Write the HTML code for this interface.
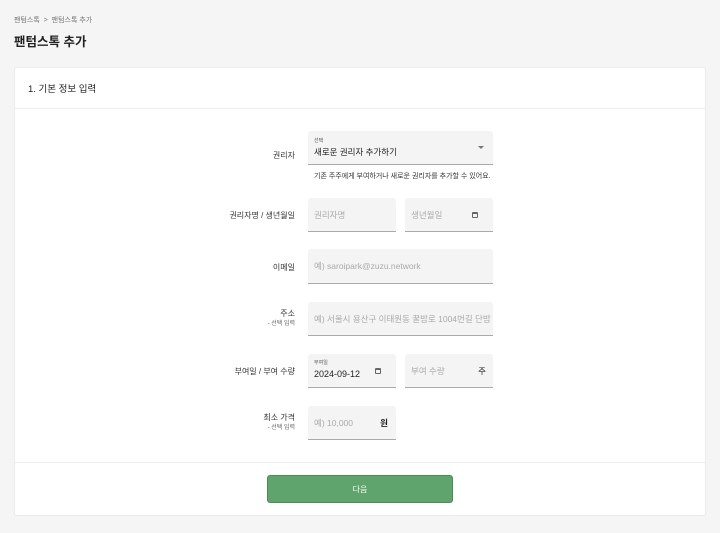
<!DOCTYPE html>
<html><head><meta charset="utf-8"><style>
*{box-sizing:border-box;margin:0;padding:0}
body{width:720px;height:533px;background:#f5f5f5;font-family:"Liberation Sans","Noto Sans CJK KR",sans-serif;color:#222;position:relative;overflow:hidden}
.a{position:absolute}
.bc{left:14px;top:15px;font-size:7px;color:#777}
.h1{left:14px;top:31px;font-size:12.5px;font-weight:bold;color:#222}
.card{left:14px;top:67px;width:692px;height:449px;background:#fff;border:1px solid #ebebeb;border-radius:3px}
.sec{left:28px;top:81px;font-size:9.5px;color:#222}
.line{left:15px;width:690px;height:1px;background:#eee}
.lbl{right:425px;font-size:8px;color:#333;text-align:right;line-height:11px}
.lbl small{display:block;font-size:6px;color:#666}
.f{background:#f4f4f4;border-bottom:1px solid #aaa;border-radius:3px 3px 0 0;font-size:8.5px;color:#aaa;padding-left:6px;display:flex;align-items:center}
.cal{position:absolute;right:15px;top:50%;width:6px;height:6px;margin-top:-3px;border:1.2px solid #666;border-top-width:2px;border-radius:1px}
.btn{left:267px;top:475px;width:186px;height:28px;background:#5fa36d;border:1px solid #4d8a5a;border-radius:3px;color:#fff;font-size:8px;display:flex;align-items:center;justify-content:center}
</style></head><body>
<div class="a bc">팬텀스톡 &nbsp;&gt;&nbsp; 팬텀스톡 추가</div>
<div class="a h1">팬텀스톡 추가</div>
<div class="a card"></div>
<div class="a sec">1. 기본 정보 입력</div>
<div class="a line" style="top:108px"></div>
<div class="a line" style="top:462px"></div>

<div class="a lbl" style="top:150px">권리자</div>
<div class="a f" style="left:308px;top:131px;width:185px;height:34px;display:block;padding-top:6px;color:#222">
<div style="font-size:5px;color:#555">선택</div><div style="font-size:8.5px;margin-top:2px">새로운 권리자 추가하기</div>
<div style="position:absolute;right:9px;top:15px;border-left:3px solid transparent;border-right:3px solid transparent;border-top:3px solid #777"></div></div>
<div class="a" style="left:314px;top:171px;font-size:7px;color:#333">기존 주주에게 부여하거나 새로운 권리자를 추가할 수 있어요.</div>

<div class="a lbl" style="top:210px">권리자명 / 생년월일</div>
<div class="a f" style="left:308px;top:198px;width:88px;height:34px">권리자명</div>
<div class="a f" style="left:405px;top:198px;width:88px;height:34px">생년월일<span class="cal"></span></div>

<div class="a lbl" style="top:262px">이메일</div>
<div class="a f" style="left:308px;top:249px;width:185px;height:35px">예) saroipark@zuzu.network</div>

<div class="a lbl" style="top:308px">주소<small>- 선택 입력</small></div>
<div class="a f" style="left:308px;top:302px;width:185px;height:34px;overflow:hidden;white-space:nowrap">예) 서울시 용산구 이태원동 꿀밤로 1004번길 단밤</div>

<div class="a lbl" style="top:366px">부여일 / 부여 수량</div>
<div class="a f" style="left:308px;top:354px;width:88px;height:34px;display:block;padding-top:5px;color:#222">
<div style="font-size:5px;color:#555">부여일</div><div style="font-size:9px;margin-top:3px">2024-09-12</div><span class="cal"></span></div>
<div class="a f" style="left:405px;top:354px;width:88px;height:34px">부여 수량<span style="position:absolute;right:7px;color:#222;font-size:8.5px">주</span></div>

<div class="a lbl" style="top:412px">최소 가격<small>- 선택 입력</small></div>
<div class="a f" style="left:308px;top:406px;width:88px;height:34px">예) 10,000<span style="position:absolute;right:8px;color:#222;font-size:8.5px;font-weight:bold">원</span></div>

<div class="a btn">다음</div>
</body></html>
